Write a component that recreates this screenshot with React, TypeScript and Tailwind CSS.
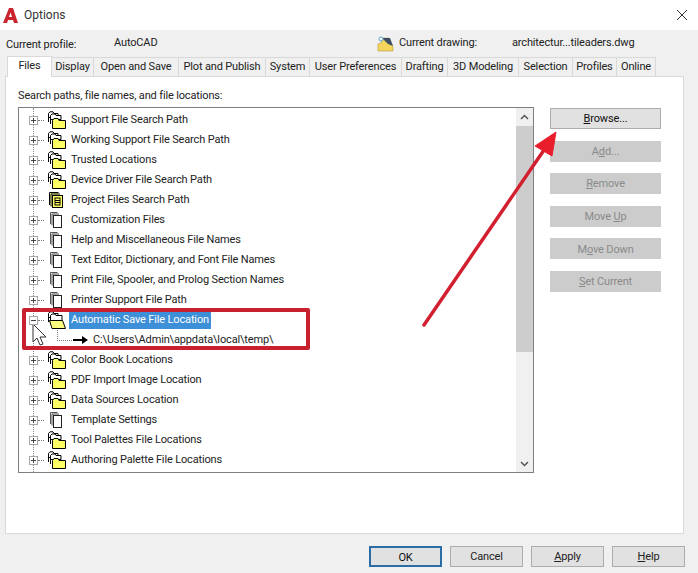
import React from 'react';

const tabs = [
  { label: 'Display', w: 'w-[42px]' },
  { label: 'Open and Save', w: 'w-[85px]' },
  { label: 'Plot and Publish', w: 'w-[87px]' },
  { label: 'System', w: 'w-[44px]' },
  { label: 'User Preferences', w: 'w-[92px]' },
  { label: 'Drafting', w: 'w-[46px]' },
  { label: '3D Modeling', w: 'w-[71px]' },
  { label: 'Selection', w: 'w-[54px]' },
  { label: 'Profiles', w: 'w-[44px]' },
  { label: 'Online', w: 'w-[39px]' },
];

const rows = [
  { label: 'Support File Search Path', icon: 'folder' },
  { label: 'Working Support File Search Path', icon: 'folder' },
  { label: 'Trusted Locations', icon: 'folder' },
  { label: 'Device Driver File Search Path', icon: 'folder' },
  { label: 'Project Files Search Path', icon: 'project' },
  { label: 'Customization Files', icon: 'doc' },
  { label: 'Help and Miscellaneous File Names', icon: 'doc' },
  { label: 'Text Editor, Dictionary, and Font File Names', icon: 'doc' },
  { label: 'Print File, Spooler, and Prolog Section Names', icon: 'doc' },
  { label: 'Printer Support File Path', icon: 'doc' },
  { label: 'Automatic Save File Location', icon: 'open', selected: true },
  { label: 'C:\\Users\\Admin\\appdata\\local\\temp\\', icon: 'arrow', child: true },
  { label: 'Color Book Locations', icon: 'folder' },
  { label: 'PDF Import Image Location', icon: 'folder' },
  { label: 'Data Sources Location', icon: 'folder' },
  { label: 'Template Settings', icon: 'doc' },
  { label: 'Tool Palettes File Locations', icon: 'folder' },
  { label: 'Authoring Palette File Locations', icon: 'folder' },
];

const FolderIcon = () => (
  <svg width="19" height="18" viewBox="0 0 19 18" className="shrink-0">
    <path d="M1.500 11V2.500L3 .8h3l1 1.700h4v4H1.500" fill="#fff" stroke="#000" />
    <path d="M3.500 13V4.500L5 3h3l1 1.500h5v4H3.500" fill="#fff" stroke="#000" />
    <path d="M5.500 17.500V9.500L7 7.500h4l1 2h6.500v8z" fill="#ffff66" stroke="#000" />
  </svg>
);

const OpenFolderIcon = () => (
  <svg width="19" height="18" viewBox="0 0 19 18" className="shrink-0">
    <path d="M1.500 11V2.500L3 .8h3l1 1.700h4v4H1.500" fill="#fff" stroke="#000" />
    <path d="M3.500 13V4.500L5 3h3l1 1.500h6v5H3.500" fill="#fff" stroke="#000" />
    <path d="M5 17.500 2.500 9.500h13l3 8z" fill="#ffff80" stroke="#000" />
  </svg>
);

const ProjectIcon = () => (
  <svg width="16" height="18" viewBox="0 0 16 18" className="shrink-0">
    <path d="M1.500 14V1.500h9" fill="#ffff99" stroke="#000" />
    <path d="M3 15.500V3h9" fill="#ffff99" stroke="#000" />
    <rect x="4.500" y="4.500" width="10" height="12" fill="#ffff66" stroke="#000" />
    <rect x="7" y="7" width="5" height="7" fill="none" stroke="#000" />
    <path d="M7 9.500h5M7 11.500h5" stroke="#000" />
  </svg>
);

const DocIcon = () => (
  <svg width="12" height="16" viewBox="0 0 12 16" className="shrink-0">
    <path d="M.5 12V.5h7" fill="#f4f4f4" stroke="#555" />
    <path d="M2 13.500V2h7" fill="#f4f4f4" stroke="#555" />
    <rect x="3.500" y="3.500" width="8" height="12" fill="#fff" stroke="#222" />
  </svg>
);

const ArrowIcon = () => (
  <svg width="15" height="12" viewBox="0 0 15 12" className="shrink-0">
    <path d="M0 5h9V2l6 4-6 4V7H0z" fill="#000" />
  </svg>
);

const Expander = ({ open }: { open?: boolean }) => (
  <span className="relative z-10 flex h-[9px] w-[9px] shrink-0 items-center justify-center border border-[#a8a8a8] bg-white">
    <span className="absolute h-px w-[5px] bg-[#444]" />
    {!open && <span className="absolute h-[5px] w-px bg-[#444]" />}
  </span>
);

const TreeRow = ({ row }: any) => {
  if (row.child) {
    return (
      <div className="flex h-5 items-center pl-[38px]">
        <span className="mb-[10px] h-[11px] w-[15px] shrink-0 border-b border-l border-dotted border-[#777]" />
        <span className="ml-[1px]"><ArrowIcon /></span>
        <span className="ml-[5px] whitespace-nowrap text-[#222]">{row.label}</span>
      </div>
    );
  }
  const isDoc = row.icon === 'doc';
  return (
    <div className="flex h-5 items-center pl-[10px]">
      <Expander open={row.selected} />
      <span className="h-0 w-[6px] shrink-0 border-t border-dotted border-[#777]" />
      <span className={isDoc ? 'ml-[6px] flex w-[20px] shrink-0' : row.icon === 'project' ? 'ml-[4px] flex w-[22px] shrink-0' : 'ml-[3px] flex w-[23px] shrink-0'}>
        {row.icon === 'folder' && <FolderIcon />}
        {row.icon === 'open' && <OpenFolderIcon />}
        {row.icon === 'project' && <ProjectIcon />}
        {isDoc && <DocIcon />}
      </span>
      <span className={row.selected ? '-ml-px whitespace-nowrap bg-[#3d8fd8] px-[2px] leading-[18px] text-white' : 'whitespace-nowrap px-px text-[#222]'}>
        {row.label}
      </span>
    </div>
  );
};

const SideButton = ({ label, u, disabled }: any) => {
  const i = label.indexOf(u);
  return (
    <button className={disabled ? 'h-[21px] w-[111px] bg-[#cccccc] pt-[2px] text-[#8a8a8a]' : 'h-[21px] w-[111px] border border-[#adadad] bg-[#e1e1e1] pt-[2px] text-[#111]'}>
      {label.slice(0, i)}<span className="underline">{u}</span>{label.slice(i + 1)}
    </button>
  );
};

const FooterButton = ({ label, u, primary }: any) => {
  const i = u ? label.indexOf(u) : -1;
  return (
    <button className={primary ? 'h-[21px] w-[73px] border-2 border-[#2b6ea6] bg-[#e1e1e1] pt-[2px] text-[#111]' : 'h-[21px] w-[73px] border border-[#adadad] bg-[#e1e1e1] pt-[2px] text-[#222]'}>
      {i >= 0 ? <>{label.slice(0, i)}<span className="underline">{u}</span>{label.slice(i + 1)}</> : label}
    </button>
  );
};

export default function App() {
  return (
    <div className="relative flex h-[573px] w-[698px] flex-col overflow-hidden bg-[#f0f0f0] font-['Roboto',sans-serif] text-[11px] tracking-[-0.15px] text-[#222]">
      <div className="flex h-[30px] shrink-0 items-center bg-white pl-[3px] pr-[6px]">
        <svg width="15" height="15" viewBox="0 0 15 15" className="shrink-0">
          <path d="M0 15 6 0h4l5 15h-4l-1-3H5l-1 3zM6 9h3L7.500 4.500z" fill="#c8252f" fillRule="evenodd" />
        </svg>
        <span className="ml-[6px] text-[12px] tracking-[0px] text-[#333]">Options</span>
        <svg width="12" height="12" viewBox="0 0 12 12" className="ml-auto mr-[4px]">
          <path d="M1 1l10 10M11 1 1 11" stroke="#333" strokeWidth="1" />
        </svg>
      </div>

      <div className="flex h-[26px] shrink-0 items-center pl-[6px]">
        <span className="w-[108px] pt-[4px]">Current profile:</span>
        <span className="w-[263px]">AutoCAD</span>
        <svg width="17" height="17" viewBox="0 0 17 17" className="shrink-0">
          <path d="M1 16V9l3-1 2-5h6l4 9v4z" fill="#f3d55c" stroke="#a88b2a" strokeWidth="0.5" />
          <path d="M5 3h8l3 8-5-2-3-3z" fill="#3d4f66" />
          <circle cx="4" cy="4" r="2" fill="#fff" stroke="#5aa0c8" />
        </svg>
        <span className="ml-[5px] w-[113px]">Current drawing:</span>
        <span>architectur...tileaders.dwg</span>
      </div>

      <div className="relative z-10 flex h-[20px] shrink-0 items-end pl-[7px]">
        <div className="-mb-px flex h-[21px] w-[45px] items-center justify-center border border-b-0 border-[#d9d9d9] bg-white pb-[2px]">Files</div>
        {tabs.map((t) => (
          <div key={t.label} className={`${t.w} flex h-[19px] shrink-0 items-center justify-center whitespace-nowrap border-r border-t border-[#d9d9d9] bg-[#f0f0f0] pt-px`}>
            {t.label}
          </div>
        ))}
      </div>

      <div className="ml-[5px] flex h-[458px] w-[679px] shrink-0 flex-col border border-[#d9d9d9] bg-white pl-[12px] pt-[12px]">
        <div className="h-[18px] leading-[14px]">Search paths, file names, and file locations:</div>
        <div className="flex gap-[16px]">
          <div className="relative flex h-[366px] w-[516px] overflow-hidden border border-[#7f7f7f]">
            <div className="absolute bottom-0 left-[14px] top-0 border-l border-dotted border-[#8a8a8a]" />
            <div className="relative flex-1 pt-[2px]">
              {rows.map((r) => <TreeRow key={r.label} row={r} />)}
            </div>
            <div className="relative flex w-[17px] shrink-0 flex-col bg-[#f0f0f0]">
              <div className="flex h-[18px] shrink-0 items-center justify-center">
                <svg width="9" height="6" viewBox="0 0 9 6"><path d="M1 5l3.500-3.500L8 5" fill="none" stroke="#555" strokeWidth="1.500" /></svg>
              </div>
              <div className="h-[226px] shrink-0 bg-[#cdcdcd]" />
              <div className="flex-1" />
              <div className="flex h-[17px] shrink-0 items-center justify-center">
                <svg width="9" height="6" viewBox="0 0 9 6"><path d="M1 1l3.500 3.500L8 1" fill="none" stroke="#555" strokeWidth="1.500" /></svg>
              </div>
            </div>
          </div>
          <div className="flex flex-col gap-[11.600px] pt-px">
            <SideButton label="Browse..." u="B" />
            <SideButton label="Add..." u="d" disabled />
            <SideButton label="Remove" u="R" disabled />
            <SideButton label="Move Up" u="U" disabled />
            <SideButton label="Move Down" u="o" disabled />
            <SideButton label="Set Current" u="S" disabled />
          </div>
        </div>
      </div>

      <div className="flex flex-1 items-start justify-end gap-2 pr-[13px] pt-[12px]">
        <FooterButton label="OK" primary />
        <FooterButton label="Cancel" />
        <FooterButton label="Apply" u="A" />
        <FooterButton label="Help" u="H" />
      </div>

      {/* annotations drawn over the dialog */}
      <div className="absolute left-[22px] top-[308px] h-[42px] w-[288px] rounded-[2px] border-[4px] border-[#c8202f]" />
      <svg width="16" height="24" viewBox="0 0 16 24" className="absolute left-[32px] top-[323px]">
        <path d="M1 1v18l4-4 3 7 3-1-3-7h6z" fill="#fff" stroke="#333" />
      </svg>
      <svg width="150" height="210" viewBox="0 0 150 210" className="absolute left-[415px] top-[125px]">
        <path d="M9 200 129 25" stroke="#d32030" strokeWidth="3.500" strokeLinecap="round" />
        <path d="M141 7 120 21 137 31z" fill="#e81e2c" stroke="#e81e2c" strokeWidth="1" />
      </svg>
    </div>
  );
}
